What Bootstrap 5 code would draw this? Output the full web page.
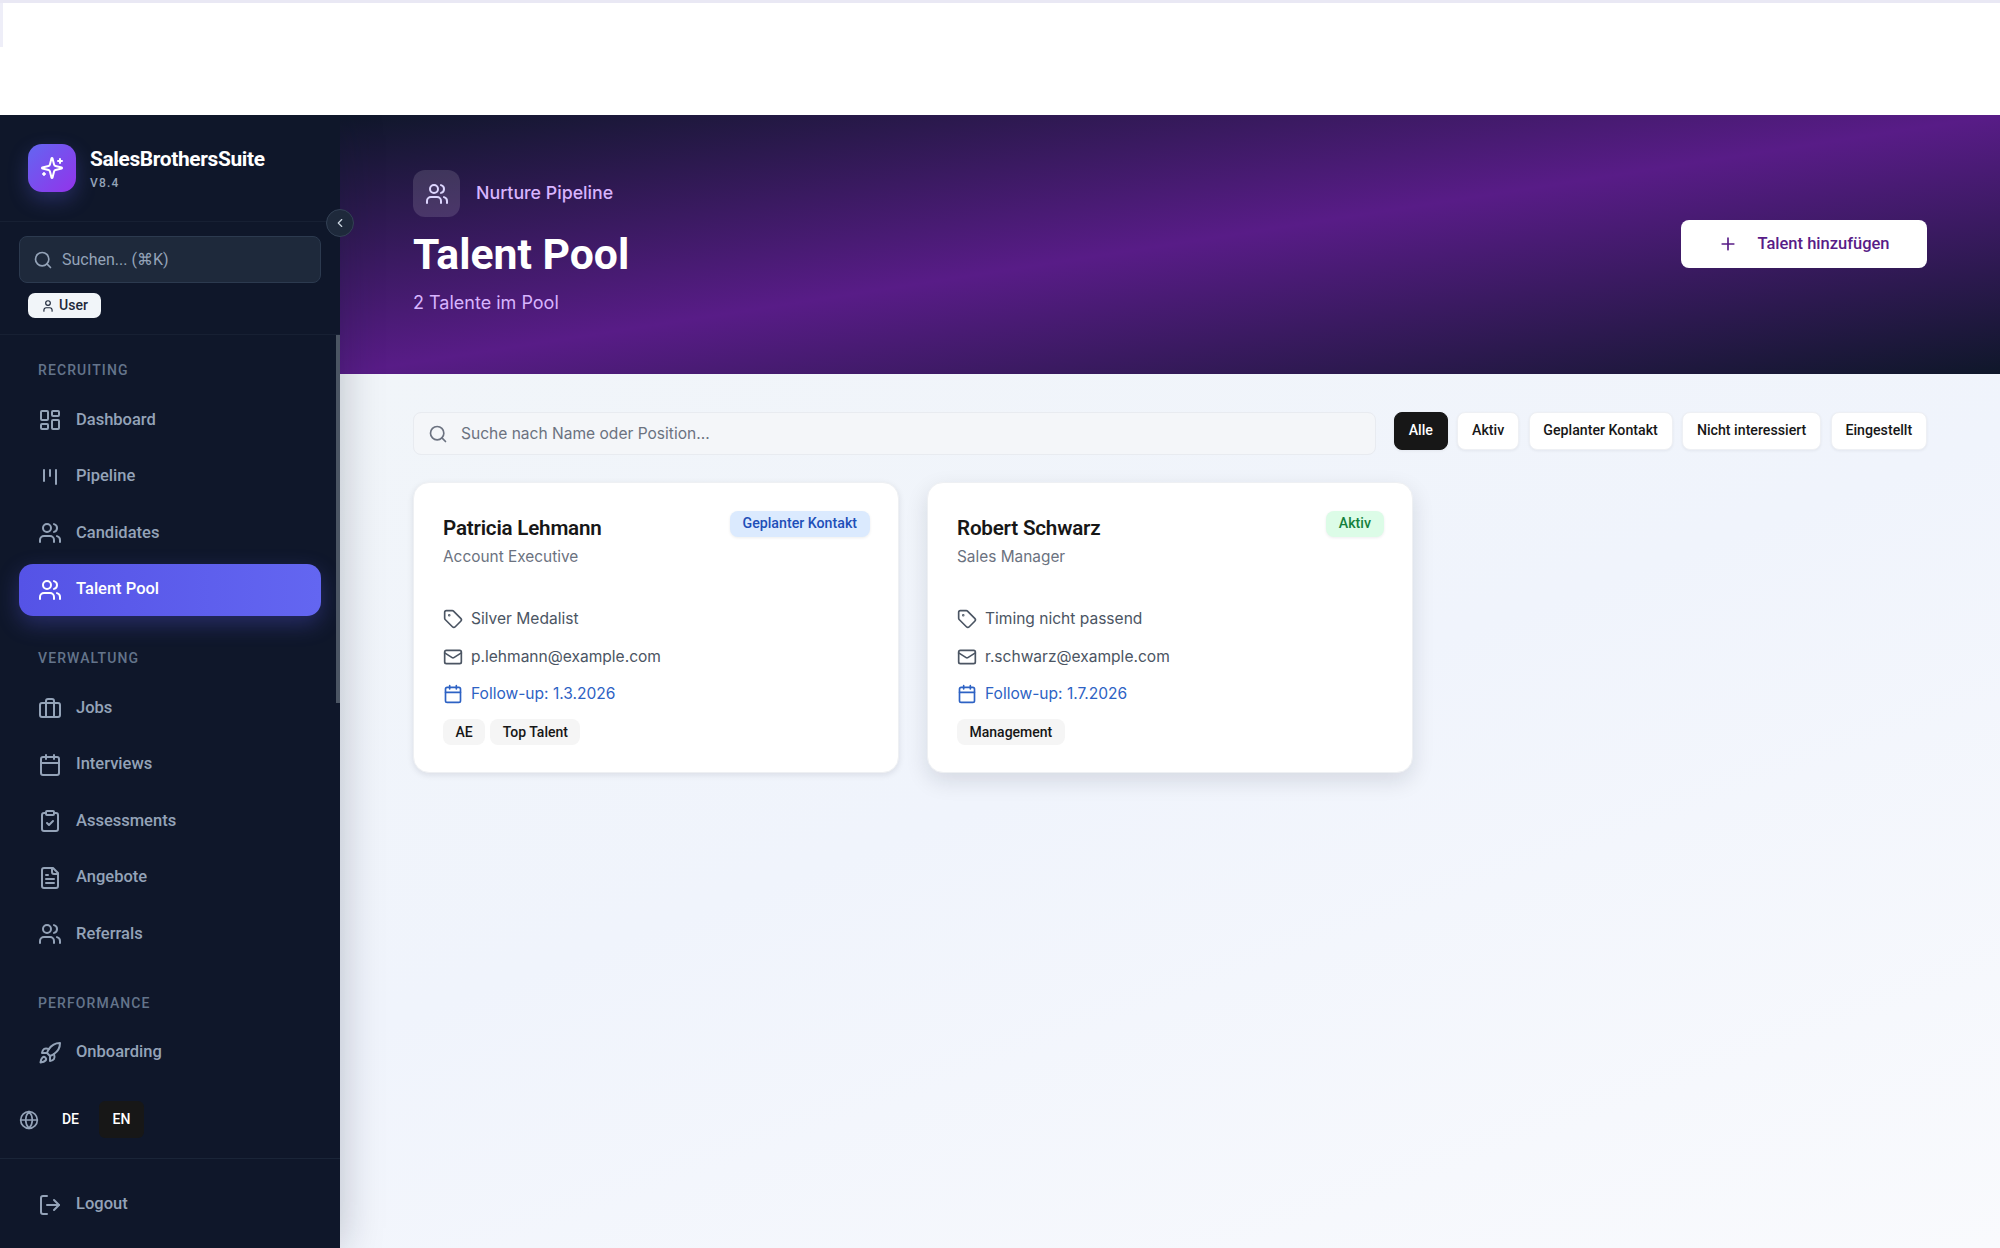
<!DOCTYPE html>
<html lang="de">
<head>
  <meta charset="UTF-8" />
  <meta name="viewport" content="width=device-width, initial-scale=1.0"/>
  <title>Talent Pool</title>
  <link href="https://cdn.jsdelivr.net/npm/bootstrap@5.3.0/dist/css/bootstrap.min.css" rel="stylesheet">
  <style>
    html, body { height: 100%; overflow: hidden; }
    body { font-family: Roboto, "Liberation Sans", sans-serif; background: #fff; }
    .ico { fill: none; stroke: currentColor; stroke-width: 2; stroke-linecap: round; stroke-linejoin: round; flex-shrink: 0; }
    .txt-inter { font-family: Inter, "Liberation Sans", sans-serif; }

    .top-blank {
      height: 115px; flex-shrink: 0; position: relative; z-index: 3;
      border-top: 3px solid #e9e8f4;
      background: linear-gradient(#eeeef8, #eeeef8) 0 0 / 3px 44px no-repeat, #fff;
    }
    .app-row { min-height: 0; }

    /* sidebar */
    .side { width: 340px; flex-shrink: 0; background: #0f172a; box-shadow: 0 0 40px rgba(15,23,42,.25); z-index: 2; }
    .brand { height: 107px; padding: 29px 28px 0; border-bottom: 1px solid #172033; gap: 14px; }
    .brand-logo { width: 48px; height: 48px; border-radius: 14px; color: #fff; background: linear-gradient(135deg, #6366f1, #9333ea); box-shadow: 0 8px 20px rgba(99,102,241,.28); }
    .brand-name { font-size: 20.9px; font-weight: 700; line-height: 26px; letter-spacing: -.35px; color: #fff; margin-top: 2px; }
    .brand-ver { font-size: 12px; font-weight: 500; line-height: 16px; letter-spacing: 1.2px; color: #94a3b8; margin-top: 3px; }
    .side-tools { height: 113px; padding: 14px 19px 0; border-bottom: 1px solid #172033; }
    .side-search { height: 47px; padding-left: 13px; background: #1e293b; border: 1px solid #2c3a4f; border-radius: 8px; color: #94a3b8; }
    .side-search .form-control { font-size: 16px; padding: 0 0 0 9px; color: #cbd5e1; }
    .side-search .form-control::placeholder { color: #94a3b8; }
    .role-chip { margin: 10px 0 0 9px; width: 73px; height: 25px; font-size: 14px; font-weight: 500; color: #1e293b; background: #f1f5f9; border-radius: 7px; }
    .side-scroll { min-height: 0; padding: 0 19px; overflow: hidden; }
    .side-thumb { top: 0; right: 0; width: 4px; height: 368px; background: #4b5563; }
    .side-head { font-size: 14px; font-weight: 500; letter-spacing: 1.1px; line-height: 18px; color: #64748b; padding-left: 19px; }
    .side-head.first { margin-top: 26px; }
    .side-group { gap: 4.5px; margin: 15px 0 33.5px; }
    .side-link { height: 52px; padding: 0 0 0 19px; gap: 14px; font-size: 16.5px; font-weight: 500; color: #94a3b8; border-radius: 14px; }
    .side-link:hover { color: #94a3b8; }
    .side-link.active { color: #fff; background: linear-gradient(90deg, #5553e6, #6366f1); box-shadow: 0 8px 22px rgba(91,91,232,.32); }
    .lang-row { height: 73px; padding: 0 0 5px 19px; gap: 6px; border-bottom: 1px solid #1a2538; flex-shrink: 0; color: #94a3b8; }
    .lang-row .ico { margin-right: 3px; }
    .lang-btn { width: 45px; height: 37px; padding: 0; font-size: 14px; font-weight: 500; color: #fff; border: 0; border-radius: 6px; }
    .lang-btn.on { background: #171717; color: #fff; }
    .logout-row { height: 89px; padding: 2px 19px 0; flex-shrink: 0; }
    .collapse-btn { top: 94px; right: -14px; width: 28px; height: 28px; padding: 0; background: #1e293b; border: 1px solid #334155; border-radius: 50%; color: #cbd5e1; z-index: 3; }

    /* hero */
    .hero { height: 259px; flex-shrink: 0; padding: 55px 73px 0; background: linear-gradient(to bottom right, #0f172a, #581c87, #0f172a); }
    .hero-ico { width: 47px; height: 47px; border-radius: 12px; background: rgba(255,255,255,.13); color: #ddd6fe; }
    .hero-kicker { font-size: 17.8px; font-weight: 500; color: #d8b4fe; }
    .hero-title { font-size: 42.7px; font-weight: 700; line-height: 52px; color: #fff; margin: 11px 0 0; }
    .hero-sub { font-size: 18px; line-height: 26px; color: #d8b4fe; margin: 10px 0 0; }
    .hero-btn { width: 246px; height: 48px; margin-top: 50px; gap: 19px; font-size: 16.5px; font-weight: 500; color: #581c87; background: #fff; border: 0; border-radius: 8px; }
    .hero-btn:hover { color: #581c87; background: #fff; }

    /* content */
    .page-body { background: linear-gradient(160deg, #f1f5f9, #f0f4fc 45%, #f9fafd); padding: 38px 73px 0; }
    .find-box { height: 43px; padding-left: 14px; background: #f4f6f9; border: 1px solid #e8ebf0; border-radius: 8px; color: #6b7280; margin-right: 18px; }
    .find-box .form-control { font-size: 15.55px; padding: 0 0 0 13px; }
    .find-box .form-control::placeholder { color: #6b7280; }
    .chip-row { gap: 9.5px; }
    .chip-btn { height: 38px; padding: 0 13.8px; font-size: 14.2px; font-weight: 500; color: #171717; background: #fff; border: 1px solid #eef0f4; border-radius: 8px; box-shadow: 0 1px 3px rgba(15,23,42,.06); }
    .chip-btn.on { color: #fff; background: #171717; border-color: #171717; }
    .talent-grid { display: grid; grid-template-columns: repeat(3, 1fr); gap: 28px; margin-top: 27px; }
    .talent-card { height: 291px; padding: 28px 28px 0 29px; border: 1px solid #eef0f3; border-radius: 16px; box-shadow: 0 2px 6px rgba(15,23,42,.1); }
    .talent-card.lift { box-shadow: 0 8px 22px rgba(15,23,42,.12); }
    .talent-name { font-size: 20.6px; font-weight: 600; line-height: 30px; letter-spacing: -.2px; color: #171717; margin: 2px 0 0; }
    .talent-role { font-size: 15.4px; line-height: 24px; color: #6b7280; margin-top: 2px; }
    .state-pill { height: 26px; padding: 0 13px; font-size: 14.2px; font-weight: 500; border-radius: 8px; box-shadow: 0 1px 3px rgba(15,23,42,.08); }
    .state-blue { color: #1e4fb8; background: #dbeafe; }
    .state-green { color: #15803d; background: #dcfce7; }
    .info-list { margin-top: 38px; gap: 13.5px; }
    .info-line { height: 24px; gap: 8px; font-size: 15.55px; color: #4b5563; }
    .info-line.due { color: #2d62c4; }
    .skill-row { gap: 5px; margin-top: 13px; }
    .skill-tag { height: 26px; padding: 0 12.5px; font-size: 14px; font-weight: 500; color: #171717; background: #f5f5f5; border-radius: 8px; }
  </style>
</head>
<body>
  <svg width="0" height="0" class="position-absolute">
    <symbol id="i-sparkles" viewBox="0 0 24 24"><path d="M9.937 15.5A2 2 0 0 0 8.5 14.063l-6.135-1.582a.5.5 0 0 1 0-.962L8.5 9.936A2 2 0 0 0 9.937 8.5l1.582-6.135a.5.5 0 0 1 .963 0L14.063 8.5A2 2 0 0 0 15.5 9.937l6.135 1.581a.5.5 0 0 1 0 .964L15.5 14.063a2 2 0 0 0-1.437 1.437l-1.582 6.135a.5.5 0 0 1-.963 0z"/><path d="M20 3v4M22 5h-4M4 17v2M5 18H3"/></symbol>
    <symbol id="i-search" viewBox="0 0 24 24"><circle cx="11" cy="11" r="8"/><path d="m21 21-4.3-4.3"/></symbol>
    <symbol id="i-user" viewBox="0 0 24 24"><path d="M19 21v-2a4 4 0 0 0-4-4H9a4 4 0 0 0-4 4v2"/><circle cx="12" cy="7" r="4"/></symbol>
    <symbol id="i-dash" viewBox="0 0 24 24"><rect x="3" y="3" width="7" height="9" rx="1"/><rect x="14" y="3" width="7" height="5" rx="1"/><rect x="14" y="12" width="7" height="9" rx="1"/><rect x="3" y="16" width="7" height="5" rx="1"/></symbol>
    <symbol id="i-kanban" viewBox="0 0 24 24"><path d="M6 5v11M12 5v6M18 5v14"/></symbol>
    <symbol id="i-users" viewBox="0 0 24 24"><path d="M16 21v-2a4 4 0 0 0-4-4H6a4 4 0 0 0-4 4v2"/><circle cx="9" cy="7" r="4"/><path d="M22 21v-2a4 4 0 0 0-3-3.87M16 3.13a4 4 0 0 1 0 7.75"/></symbol>
    <symbol id="i-brief" viewBox="0 0 24 24"><rect x="2" y="7" width="20" height="14" rx="2"/><path d="M16 21V5a2 2 0 0 0-2-2h-4a2 2 0 0 0-2 2v16"/></symbol>
    <symbol id="i-cal" viewBox="0 0 24 24"><path d="M8 2v4M16 2v4"/><rect x="3" y="4" width="18" height="18" rx="2"/><path d="M3 10h18"/></symbol>
    <symbol id="i-clip" viewBox="0 0 24 24"><rect x="8" y="2" width="8" height="4" rx="1"/><path d="M16 4h2a2 2 0 0 1 2 2v14a2 2 0 0 1-2 2H6a2 2 0 0 1-2-2V6a2 2 0 0 1 2-2h2"/><path d="m9 14 2 2 4-4"/></symbol>
    <symbol id="i-file" viewBox="0 0 24 24"><path d="M15 2H6a2 2 0 0 0-2 2v16a2 2 0 0 0 2 2h12a2 2 0 0 0 2-2V7Z"/><path d="M14 2v4a2 2 0 0 0 2 2h4M10 9H8M16 13H8M16 17H8"/></symbol>
    <symbol id="i-rocket" viewBox="0 0 24 24"><path d="M4.5 16.5c-1.5 1.26-2 5-2 5s3.74-.5 5-2c.71-.84.7-2.13-.09-2.91a2.18 2.18 0 0 0-2.91-.09z"/><path d="m12 15-3-3a22 22 0 0 1 2-3.95A12.88 12.88 0 0 1 22 2c0 2.72-.78 7.5-6 11a22.35 22.35 0 0 1-4 2z"/><path d="M9 12H4s.55-3.03 2-4c1.62-1.08 5 0 5 0M12 15v5s3.03-.55 4-2c1.08-1.62 0-5 0-5"/></symbol>
    <symbol id="i-globe" viewBox="0 0 24 24"><circle cx="12" cy="12" r="10"/><path d="M12 2a14.5 14.5 0 0 0 0 20 14.5 14.5 0 0 0 0-20M2 12h20"/></symbol>
    <symbol id="i-logout" viewBox="0 0 24 24"><path d="M9 21H5a2 2 0 0 1-2-2V5a2 2 0 0 1 2-2h4M21 12H9"/><path d="m16 17 5-5-5-5"/></symbol>
    <symbol id="i-tag" viewBox="0 0 24 24"><path d="M12.586 2.586A2 2 0 0 0 11.172 2H4a2 2 0 0 0-2 2v7.172a2 2 0 0 0 .586 1.414l8.704 8.704a2.426 2.426 0 0 0 3.42 0l6.58-6.58a2.426 2.426 0 0 0 0-3.42z"/><circle cx="7.5" cy="7.5" r=".5" fill="currentColor"/></symbol>
    <symbol id="i-mail" viewBox="0 0 24 24"><rect x="2" y="4" width="20" height="16" rx="2"/><path d="m22 7-8.97 5.7a1.94 1.94 0 0 1-2.06 0L2 7"/></symbol>
    <symbol id="i-plus" viewBox="0 0 24 24"><path d="M5 12h14M12 5v14"/></symbol>
    <symbol id="i-left" viewBox="0 0 24 24"><path d="m15 18-6-6 6-6"/></symbol>
  </svg>

  <div class="d-flex flex-column vh-100">
    <div class="top-blank"></div>
    <div class="app-row d-flex flex-grow-1">

      <aside class="side d-flex flex-column position-relative">
        <div class="brand d-flex align-items-start flex-shrink-0">
          <div class="brand-logo d-flex align-items-center justify-content-center">
            <svg class="ico" width="24" height="24"><use href="#i-sparkles"/></svg>
          </div>
          <div>
            <div class="brand-name">SalesBrothersSuite</div>
            <div class="brand-ver">V8.4</div>
          </div>
        </div>
        <button class="collapse-btn btn position-absolute d-flex align-items-center justify-content-center" type="button">
          <svg class="ico" width="14" height="14"><use href="#i-left"/></svg>
        </button>
        <div class="side-tools flex-shrink-0">
          <div class="side-search d-flex align-items-center">
            <svg class="ico" width="20" height="20"><use href="#i-search"/></svg>
            <input class="form-control bg-transparent border-0 shadow-none" placeholder="Suchen... (⌘K)">
          </div>
          <div class="role-chip d-flex align-items-center justify-content-center gap-1">
            <svg class="ico" width="14" height="14"><use href="#i-user"/></svg>User
          </div>
        </div>

        <div class="side-scroll flex-grow-1 position-relative">
          <div class="side-thumb position-absolute"></div>
          <div class="side-head first">RECRUITING</div>
          <nav class="nav flex-column side-group">
            <a class="nav-link side-link d-flex align-items-center" href="#"><svg class="ico" width="24" height="24"><use href="#i-dash"/></svg>Dashboard</a>
            <a class="nav-link side-link d-flex align-items-center" href="#"><svg class="ico" width="24" height="24"><use href="#i-kanban"/></svg>Pipeline</a>
            <a class="nav-link side-link d-flex align-items-center" href="#"><svg class="ico" width="24" height="24"><use href="#i-users"/></svg>Candidates</a>
            <a class="nav-link side-link active d-flex align-items-center" href="#"><svg class="ico" width="24" height="24"><use href="#i-users"/></svg>Talent Pool</a>
          </nav>
          <div class="side-head">VERWALTUNG</div>
          <nav class="nav flex-column side-group">
            <a class="nav-link side-link d-flex align-items-center" href="#"><svg class="ico" width="24" height="24"><use href="#i-brief"/></svg>Jobs</a>
            <a class="nav-link side-link d-flex align-items-center" href="#"><svg class="ico" width="24" height="24"><use href="#i-cal"/></svg>Interviews</a>
            <a class="nav-link side-link d-flex align-items-center" href="#"><svg class="ico" width="24" height="24"><use href="#i-clip"/></svg>Assessments</a>
            <a class="nav-link side-link d-flex align-items-center" href="#"><svg class="ico" width="24" height="24"><use href="#i-file"/></svg>Angebote</a>
            <a class="nav-link side-link d-flex align-items-center" href="#"><svg class="ico" width="24" height="24"><use href="#i-users"/></svg>Referrals</a>
          </nav>
          <div class="side-head">PERFORMANCE</div>
          <nav class="nav flex-column side-group">
            <a class="nav-link side-link d-flex align-items-center" href="#"><svg class="ico" width="24" height="24"><use href="#i-rocket"/></svg>Onboarding</a>
          </nav>
        </div>

        <div class="lang-row d-flex align-items-center">
          <svg class="ico" width="20" height="20"><use href="#i-globe"/></svg>
          <button class="lang-btn btn" type="button">DE</button>
          <button class="lang-btn on btn" type="button">EN</button>
        </div>
        <div class="logout-row d-flex align-items-center">
          <a class="nav-link side-link d-flex align-items-center w-100" href="#"><svg class="ico" width="24" height="24"><use href="#i-logout"/></svg>Logout</a>
        </div>
      </aside>

      <main class="flex-grow-1 d-flex flex-column">
        <section class="hero d-flex justify-content-between align-items-start">
          <div>
            <div class="d-flex align-items-center gap-3">
              <div class="hero-ico d-flex align-items-center justify-content-center">
                <svg class="ico" width="24" height="24"><use href="#i-users"/></svg>
              </div>
              <span class="hero-kicker txt-inter">Nurture Pipeline</span>
            </div>
            <h1 class="hero-title">Talent Pool</h1>
            <p class="hero-sub txt-inter">2 Talente im Pool</p>
          </div>
          <button class="hero-btn btn d-flex align-items-center justify-content-center" type="button">
            <svg class="ico" width="20" height="20"><use href="#i-plus"/></svg>Talent hinzufügen
          </button>
        </section>

        <section class="page-body flex-grow-1">
          <div class="d-flex align-items-start">
            <div class="find-box d-flex align-items-center flex-grow-1">
              <svg class="ico" width="20" height="20"><use href="#i-search"/></svg>
              <input class="form-control txt-inter bg-transparent border-0 shadow-none" placeholder="Suche nach Name oder Position...">
            </div>
            <div class="chip-row d-flex flex-shrink-0">
              <button class="chip-btn on btn" type="button">Alle</button>
              <button class="chip-btn btn" type="button">Aktiv</button>
              <button class="chip-btn btn" type="button">Geplanter Kontakt</button>
              <button class="chip-btn btn" type="button">Nicht interessiert</button>
              <button class="chip-btn btn" type="button">Eingestellt</button>
            </div>
          </div>

          <div class="talent-grid">
            <article class="talent-card card">
              <div class="d-flex justify-content-between align-items-start">
                <div>
                  <h3 class="talent-name">Patricia Lehmann</h3>
                  <div class="talent-role txt-inter">Account Executive</div>
                </div>
                <span class="state-pill state-blue d-inline-flex align-items-center">Geplanter Kontakt</span>
              </div>
              <div class="info-list txt-inter d-flex flex-column">
                <div class="info-line d-flex align-items-center"><svg class="ico" width="20" height="20"><use href="#i-tag"/></svg>Silver Medalist</div>
                <div class="info-line d-flex align-items-center"><svg class="ico" width="20" height="20"><use href="#i-mail"/></svg>p.lehmann@example.com</div>
                <div class="info-line due d-flex align-items-center"><svg class="ico" width="20" height="20"><use href="#i-cal"/></svg>Follow-up: 1.3.2026</div>
              </div>
              <div class="skill-row d-flex">
                <span class="skill-tag d-inline-flex align-items-center">AE</span>
                <span class="skill-tag d-inline-flex align-items-center">Top Talent</span>
              </div>
            </article>

            <article class="talent-card lift card">
              <div class="d-flex justify-content-between align-items-start">
                <div>
                  <h3 class="talent-name">Robert Schwarz</h3>
                  <div class="talent-role txt-inter">Sales Manager</div>
                </div>
                <span class="state-pill state-green d-inline-flex align-items-center">Aktiv</span>
              </div>
              <div class="info-list txt-inter d-flex flex-column">
                <div class="info-line d-flex align-items-center"><svg class="ico" width="20" height="20"><use href="#i-tag"/></svg>Timing nicht passend</div>
                <div class="info-line d-flex align-items-center"><svg class="ico" width="20" height="20"><use href="#i-mail"/></svg>r.schwarz@example.com</div>
                <div class="info-line due d-flex align-items-center"><svg class="ico" width="20" height="20"><use href="#i-cal"/></svg>Follow-up: 1.7.2026</div>
              </div>
              <div class="skill-row d-flex">
                <span class="skill-tag d-inline-flex align-items-center">Management</span>
              </div>
            </article>
          </div>
        </section>
      </main>
    </div>
  </div>
  <script src="https://cdn.jsdelivr.net/npm/bootstrap@5.3.0/dist/js/bootstrap.bundle.min.js"></script>
</body>
</html>
